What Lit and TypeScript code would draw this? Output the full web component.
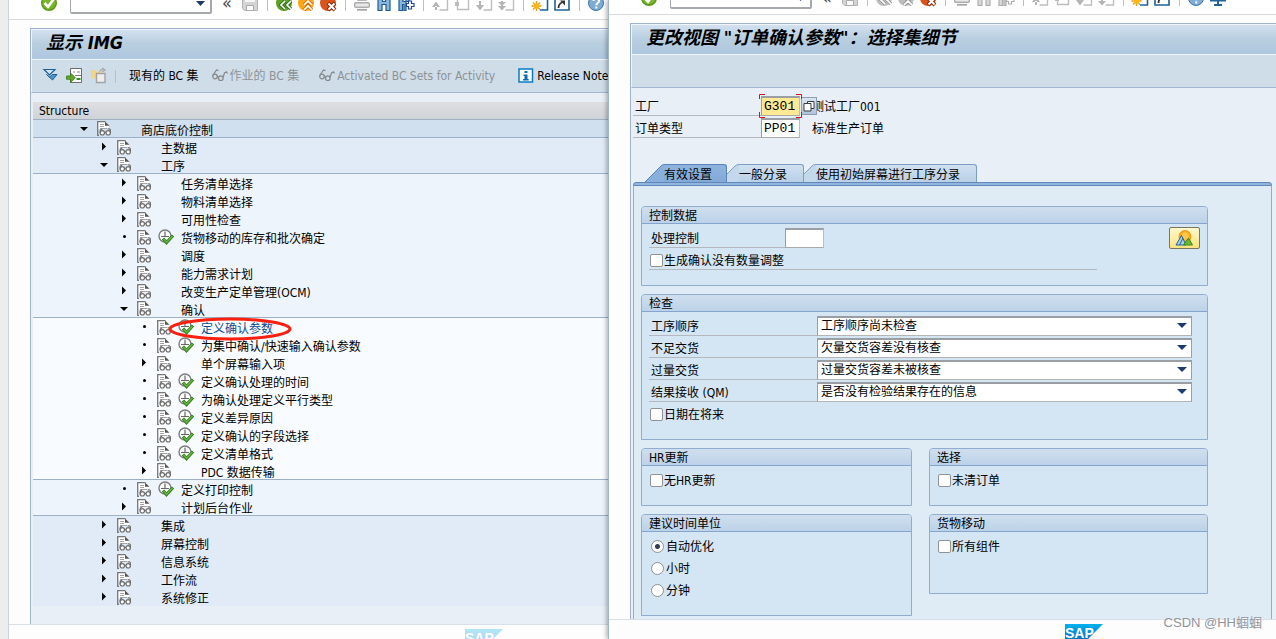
import { LitElement, html, css, svg, nothing, TemplateResult } from "lit";
import { customElement, property } from "lit/decorators.js";
import { classMap } from "lit/directives/class-map.js";

type Glyph = TemplateResult<2>;

const page = (accent: string) => svg`<path d="M4.5 1.5h11v13.5h-8" fill="#fff" stroke=${accent} stroke-width="1.4"/>`;

const glyphs: Record<string, (on: boolean) => Glyph> = {
  ok: () => svg`<circle cx="8" cy="8" r="8" fill="#5e9a1c"/><circle cx="8" cy="7.5" r="6.6" fill="#7ab52a"/><path d="M3.5 8l3.5 3.8 6-8" fill="none" stroke="#fff" stroke-width="2.6"/>`,
  save: () => svg`<path d="M.5.5h15v15h-13l-2-2z" fill="#d4d4d4" stroke="#b4b4b4"/><path d="M3 1h10v6H3z" fill="#f6f6f6"/><path d="M4.5 10.5h7v5h-7z" fill="#fafafa" stroke="#aaa"/>`,
  back: (on) => svg`<circle cx="8" cy="8" r="8" fill=${on ? "#5da023" : "#bdbdbd"}/><path d="M9 6l-4 4 4 4M15 6l-4 4 4 4" fill="none" stroke=${on ? "#2f6e12" : "#9a9a9a"} stroke-width="3.4"/><path d="M9 6l-4 4 4 4M15 6l-4 4 4 4" fill="none" stroke="#fff" stroke-width="1.7"/>`,
  exit: (on) => svg`<circle cx="8" cy="8" r="8" fill=${on ? "#f9a814" : "#bdbdbd"}/><path d="M6 10l4-4 4 4M6 15l4-4 4 4" fill="none" stroke=${on ? "#d9700a" : "#9a9a9a"} stroke-width="3.4"/><path d="M6 10l4-4 4 4M6 15l4-4 4 4" fill="none" stroke="#fff" stroke-width="1.7"/>`,
  cancel: () => svg`<circle cx="8" cy="8" r="8" fill="#d9541a"/><path d="M8 8l7 7M15 8l-7 7" stroke="#8e2a08" stroke-width="4"/><path d="M8.500 8.500l6 6M14.500 8.500l-6 6" stroke="#fff" stroke-width="2"/>`,
  print: () => svg`<path d="M3.500.5h9v5h-9z" fill="#f4f4f4" stroke="#b6b6b6"/><rect x=".7" y="7.700" width="14.600" height="4.600" rx="1" fill="#e8e8e8" stroke="#adadad" stroke-width="1.400"/><path d="M3 14.800h10" stroke="#a6a6a6" stroke-width="1.800"/>`,
  find: (on) => svg`<path d="M2 15.500v-12h4.500v3h3v-3H14v12h-4v-6H6v6z" fill=${on ? "#8bb6dc" : "#dadada"} stroke=${on ? "#1d5c96" : "#adadad"} stroke-width="1.200"/>`,
  findnext: (on) => svg`<path d="M1 15.500v-12h4v3h3v-3h3v3H8v9H6v-6H4.500v6z" fill=${on ? "#8bb6dc" : "#dadada"} stroke=${on ? "#1d5c96" : "#adadad"} stroke-width="1.200"/><path d="M10.500 6h3v2.500H16v3h-2.500V14h-3v-2.500H8.500v-3h2z" fill="#fff" stroke=${on ? "#24469a" : "#adadad"} stroke-width="1.200"/>`,
  first: () => svg`${page("#bdbdbd")}<path d="M0 12h8L4 6.500zM3 11h2v4H3z" fill="#b4b4b4"/>`,
  prev: () => svg`<path d="M3.500 1.500h11v13h-11z" fill="#fff" stroke="#bdbdbd" stroke-width="1.400"/><path d="M1 7h4v4H1z" fill="#bdbdbd"/>`,
  next: () => svg`${page("#bdbdbd")}<path d="M0 10h8l-4 5.500zM3 6h2v5H3z" fill="#b4b4b4"/>`,
  last: () => svg`${page("#bdbdbd")}<path d="M0 11h8l-4 4.500zM3 6h2v5H3zM0 7h8l-4 4z" fill="#b4b4b4"/>`,
  session: () => svg`<path d="M1.500 5V1h14v14H8" fill="#fff" stroke="#1f6398" stroke-width="1.600"/><path d="M4.500 6v10M-.5 11h10M1 7.500l7 7M8 7.500l-7 7" stroke="#ee9b12" stroke-width="1.300"/><circle cx="4.500" cy="11" r="2.800" fill="#ffb61c"/>`,
  shortcut: () => svg`<path d="M1 1h14v14H1z" fill="#fff" stroke="#1f6398" stroke-width="1.600"/><path d="M4.500 13c0-3 1-4.500 3.500-5.500" fill="none" stroke="#333" stroke-width="1.800"/><path d="M6 5.500h5v5z" fill="#333"/>`,
  help: () => svg`<circle cx="8" cy="8" r="7.500" fill="#7fabd3" stroke="#3c76ae"/><path d="M5.500 6c0-3 5.500-3 5.500 0 0 2-2.700 2-2.700 4.200M8.300 11.500v2" fill="none" stroke="#fff" stroke-width="2"/>`,
  monitor: () => svg`<path d="M.7 1.700h14.600v9H.7z" fill="#8bc0e6" stroke="#1f6398" stroke-width="1.400"/><path d="M8 11v3M4 15h8" stroke="#1f6398" stroke-width="2"/>`,
};

const collapseAll = svg`<path d="M1 1.500h11L6.500 7z" fill="#cfe3f3" stroke="#1e5f94" stroke-width="1.200"/><path d="M3.500 6.500l3 2.500 3-2.500H14L9.500 12z" fill="#4e94c8" stroke="#1e5f94"/>`;
const subnodes = svg`<path d="M3.500 .5h11v14h-11z" fill="#fff" stroke="#6d6d6d"/><path d="M6 4h2M10 4h3" stroke="#8a8a8a"/><path d="M8 7.500h6" stroke="#7d7d7d"/><path d="M9.500 11h4" stroke="#3a8a24" stroke-width="2"/><path d="M-.5 8h4V5L8.500 9.700 3.500 14.500v-3.200h-4z" fill="#62a52a" stroke="#3a7a16" stroke-width=".8"/>`;
const copyNode = svg`<path d="M0 2h4l1 1.500h5V10.500H0z" fill="#f2d48c"/><path d="M8.500 3.500a4 3 0 0 1 4-2M11 0l3 2-3 2" fill="none" stroke="#a7a7a7" stroke-width="1.200"/><path d="M5.500 5.500h8.500v9H5.500z" fill="#eee" stroke="#a3a3a3" stroke-width="1.400"/>`;
const glasses = (tone: string) => svg`<g fill="none" stroke=${tone} stroke-width="1.200"><circle cx="3" cy="8.500" r="2.300"/><circle cx="8.800" cy="10.200" r="2.300"/><path d="M.8 7.500L4.500 2l2 .6M5 8l1.600 1.200M11 9.500l1.500-4.500 2-1.200 1 1.700"/></g>`;
const docIcon = svg`<path d="M1 14.500V.7h7.500L12 4.500V8H1z" fill="#fff"/><path d="M2 14.300H.7V.7h7.800" fill="none" stroke="#777" stroke-width="1.300"/><path d="M8 .5v4.200h4.500z" fill="#555"/><path d="M3 3.500h4M3 5.500h4M3 7.500h7" stroke="#a4a4a4"/><g fill="#fff" stroke="#6e6e6e" stroke-width="1.200"><circle cx="5.300" cy="11.800" r="2.200"/><circle cx="11.200" cy="11.800" r="2.200"/><path d="M3.100 11.500c0-2.500.5-3.500 2.200-3.500M7.500 11.500h1.500M13.400 12V9.700c0-1.500-1-2.200-2.800-1.800" fill="none"/></g>`;
const runIcon = svg`<circle cx="7" cy="7" r="6" fill="#fff" stroke="#7d7d7d" stroke-width="1.400"/><path d="M7 2.500v5h4M3 7.500h4" fill="none" stroke="#666" stroke-width="1.200"/><path d="M5 9.500l3.500 4L15 6.500" fill="none" stroke="#2f7a1c" stroke-width="3.200"/><path d="M5.500 10l3 3.300L14.500 7" fill="none" stroke="#66b53c" stroke-width="1.600"/>`;
const picture = svg`<circle cx="9" cy="6.500" r="6" fill="#f9ae1c" stroke="#e08a10" stroke-width=".8"/><circle cx="9" cy="6" r="3.500" fill="#fdc84a"/><path d="M0 15L5.500 5.500 10 15z" fill="#a8d0ea" stroke="#20629a"/><path d="M3.500 15L7 8" stroke="#20629a"/><path d="M7.500 15L12.500 8l4 7z" fill="#6fb52c" stroke="#3c8a1e"/>`;

const icon = (body: unknown, w = 16, h = 16) =>
  html`<svg class="ic" width=${w} height=${h} viewBox="0 0 ${w} ${h}" aria-hidden="true">${body}</svg>`;

const fonts = css`
  *, *::before, *::after { box-sizing: border-box; }
  button, input, select {
    margin: 0; padding: 0; border: 0; background: none; color: inherit;
    font: inherit; border-radius: 0; appearance: none; outline: 0;
  }
  .ic { display: block; flex: none; overflow: visible; }
`;

@customElement("sap-toolbar")
class SapToolbar extends LitElement {
  @property() mode = "display";

  static styles = [fonts, css`
    :host { display: block; background: #fff; border-bottom: 1px solid #d8dade; }
    .bar { display: flex; align-items: flex-end; gap: 6px; height: 19px; padding: 0 0 8px 32px; }
    :host([mode="change"]) .bar { height: 14px; }
    button { flex: none; display: block; }
    .cmd { display: grid; flex: none; width: 142px; margin: 0 4px -3px 7px; }
    .cmd > * { grid-area: 1 / 1; }
    .cmd input { width: 100%; height: 22px; border: 1px solid #a5a9ad; border-width: 1px 2px 2px 1px; background: #fff; border-radius: 2px; }
    .cmd svg { justify-self: end; align-self: end; margin: 0 7px 7px 0; }
    .fold { width: 10px; margin-right: 4px; font-size: 18px; line-height: 17px; color: #4c4c4c; font-family: "DejaVu Sans Condensed", sans-serif; }
    .sep { flex: none; width: 1px; height: 16px; margin: 0 2px 0 3px; background: #a9c2dd; }
  `];

  render() {
    const on = this.mode === "display";
    const b = (name: string, label: string, live = on) =>
      html`<button type="button" aria-label=${label}>${icon(glyphs[name](live))}</button>`;
    const sep = html`<span class="sep"></span>`;
    return html`<div class="bar">
      ${b("ok", "Enter")}
      <div class="cmd">
        <input aria-label="Command" />
        <svg width="9" height="6" viewBox="0 0 9 6"><path d="M0 0h9L4.500 5z" fill="#1f3a73" /></svg>
      </div>
      <button class="fold" type="button">«</button>
      ${b("save", "Save")} ${sep}
      ${b("back", "Back")} ${b("exit", "Exit")} ${b("cancel", "Cancel", true)} ${sep}
      ${b("print", "Print")} ${b("find", "Find")} ${b("findnext", "Find next")} ${sep}
      ${b("first", "First page")} ${b("prev", "Previous page")} ${b("next", "Next page")} ${b("last", "Last page")} ${sep}
      ${b("session", "New session")} ${b("shortcut", "Shortcut")} ${sep}
      ${b("help", "Help")} ${b("monitor", "Layout")}
    </div>`;
  }
}

interface Node { level: number; kind: "open" | "closed" | "leaf"; text: string; run?: boolean; line?: boolean; marked?: boolean; }

const nodes: Node[] = [
  { level: 0, kind: "open", text: "商店底价控制", line: true },
  { level: 1, kind: "closed", text: "主数据" },
  { level: 1, kind: "open", text: "工序", line: true },
  { level: 2, kind: "closed", text: "任务清单选择" },
  { level: 2, kind: "closed", text: "物料清单选择" },
  { level: 2, kind: "closed", text: "可用性检查" },
  { level: 2, kind: "leaf", text: "货物移动的库存和批次确定", run: true },
  { level: 2, kind: "closed", text: "调度" },
  { level: 2, kind: "closed", text: "能力需求计划" },
  { level: 2, kind: "closed", text: "改变生产定单管理(OCM)" },
  { level: 2, kind: "open", text: "确认", line: true },
  { level: 3, kind: "leaf", text: "定义确认参数", run: true, marked: true },
  { level: 3, kind: "leaf", text: "为集中确认/快速输入确认参数", run: true },
  { level: 3, kind: "closed", text: "单个屏幕输入项" },
  { level: 3, kind: "leaf", text: "定义确认处理的时间", run: true },
  { level: 3, kind: "leaf", text: "为确认处理定义平行类型", run: true },
  { level: 3, kind: "leaf", text: "定义差异原因", run: true },
  { level: 3, kind: "leaf", text: "定义确认的字段选择", run: true },
  { level: 3, kind: "leaf", text: "定义清单格式", run: true },
  { level: 3, kind: "closed", text: "PDC 数据传输", line: true },
  { level: 2, kind: "leaf", text: "定义打印控制", run: true },
  { level: 2, kind: "closed", text: "计划后台作业", line: true },
  { level: 1, kind: "closed", text: "集成" },
  { level: 1, kind: "closed", text: "屏幕控制" },
  { level: 1, kind: "closed", text: "信息系统" },
  { level: 1, kind: "closed", text: "工作流" },
  { level: 1, kind: "closed", text: "系统修正" },
];

@customElement("img-tree")
class ImgTree extends LitElement {
  static styles = [fonts, css`
    :host { display: block; }
    .head {
      height: 18px; padding-left: 6px; line-height: 18px;
      background: linear-gradient(#dedfe0, #cfd4d8); border-bottom: 1px solid #a0b0c0;
    }
    ul { list-style: none; margin: 0; padding: 0; }
    li { position: relative; display: flex; align-items: center; height: 18px; white-space: nowrap; }
    .l0 { background: #d1e0ef; padding-left: 44px; }
    .l1 { background: #e1ebf7; padding-left: 64px; }
    .l2 { background: #edf4fc; padding-left: 84px; }
    .l3 { background: #f8fbff; padding-left: 104px; }
    .line { border-bottom: 1px solid #9cb1c8; }
    .toggle { width: 14px; height: 16px; margin-right: 6px; }
    .doc { height: 15px; margin-right: 7px; }
    .run { width: 16px; height: 16px; margin-right: 7px; }
    .text { height: 18px; padding-top: 2px; line-height: 18px; }
    .marked .text { color: #0f4c91; text-decoration: none; }
    .ring { position: absolute; left: 135px; top: -1px; z-index: 1; pointer-events: none; }
  `];

  render() {
    const marks = {
      open: svg`<path d="M3 5h8L7 9z"/>`,
      closed: svg`<path d="M5 2.500l4 4-4 4z"/>`,
      leaf: svg`<circle cx="7.500" cy="6.500" r="1.500"/>`,
    };
    return html`<div class="head">Structure</div>
      <ul>
        ${nodes.map((n) => html`<li class=${classMap({ [`l${n.level}`]: true, line: !!n.line, marked: !!n.marked })}>
          <button class="toggle" type="button" aria-label="展开">${icon(marks[n.kind], 14, 14)}</button>
          <span class="doc">${icon(docIcon, 14, 15)}</span>
          <span class="run">${n.run ? icon(runIcon) : nothing}</span>
          ${n.marked
            ? html`<a class="text" href="#">${n.text}</a>
                <svg class="ring" width="124" height="24" viewBox="0 0 124 24"><ellipse cx="62" cy="12" rx="60" ry="10" fill="none" stroke="#f9200f" stroke-width="3" /></svg>`
            : html`<span class="text">${n.text}</span>`}
        </li>`)}
      </ul>`;
  }
}

@customElement("app-root")
class AppRoot extends LitElement {
  static styles = [fonts, css`
    :host {
      position: relative; display: grid; grid-template-columns: 9px 599fr 668fr;
      height: 100vh; overflow: hidden; color: #000;
      font: 12px/18px "DejaVu Sans Condensed", "Noto Sans CJK SC", sans-serif;
    }
    .edge { background: #ededed; border-right: 1px solid #c9d3de; }
    .window { display: flex; flex-direction: column; min-width: 0; overflow: hidden; background: #fdfdfe; }
    .front { z-index: 1; overflow: visible; border-left: 1px solid #a3b3c8; box-shadow: -2px 0 4px #0004; }
    sap-toolbar { overflow: hidden; }
    .screen {
      display: flex; flex-direction: column; flex: 1; min-height: 0; margin: 8px 0 0 21px;
      border: solid #9fb1cb; border-width: 1px 0 0 1px; background: #e8eff7;
    }
    h1 {
      margin: 0; height: 31px; padding: 0 0 4px 14px; border: solid #eef4fa; border-width: 1px 0 1px 1px;
      background: linear-gradient(#d3e1f0, #b9cfe0 45%, #aec6df); white-space: nowrap;
      font: italic bold 18px/25px "DejaVu Sans Condensed", "Noto Sans CJK SC", sans-serif;
    }
    .actions {
      display: flex; align-items: center; height: 33px; padding-left: 11px; white-space: nowrap;
      background: #cfdde8; border-bottom: 1px solid #a3b6cf; border-left: 1px solid #eef4fa;
    }
    .actions button { display: flex; align-items: center; flex: none; }
    .tool { margin-right: 8px; }
    .split { flex: none; width: 1px; height: 13px; margin: 0 13px 0 0; background: #a9c2dd; }
    .cmd { margin-right: 13px; }
    .off { color: #8d9296; margin-right: 20px; gap: 2px; }
    .off + .off { margin-right: 23px; }
    .info { gap: 3px; }
    .foot { display: flex; flex: none; justify-content: flex-end; height: 15px; padding: 4px 105px 0 0; border-top: 1px solid #d9dfe8; overflow: hidden; }
    .front .foot { height: 20px; padding-right: 173px; }
    .faded { opacity: .3; }
    img-tree { margin: 9px 0 0 2px; }

    .keys { padding: 6px 0 26px 2px; }
    .row { position: relative; display: flex; height: 22px; align-items: flex-end; white-space: nowrap; }
    .caption { width: 128px; height: 18px; line-height: 19px; padding-left: 2px; border-bottom: 1px solid #b5b8bc; }
    .field { width: 39px; height: 20px; border: solid #9b9fa4; border-width: 2px 1px 1px 1px; border-right-color: #bbb; border-bottom-color: #aaa; background: #fff; }
    .key { padding-left: 2px; font-family: "Liberation Mono", monospace; font-size: 13px; }
    .active { background: #ffe995; }
    .desc { padding-left: 12px; height: 18px; line-height: 19px; }
    .corners { position: absolute; left: 126px; top: 0; z-index: 1; pointer-events: none; }
    .f4 { position: absolute; left: 168px; top: 3px; width: 16px; height: 18px; padding: 2px 1px; border: 1px solid #8f9db2; background: linear-gradient(#dbe6f3, #aec3de); }

    .tabs { display: flex; height: 18px; padding-left: 14px; }
    .tab { display: flex; height: 18px; white-space: nowrap; }
    .tab span { height: 18px; line-height: 20px; padding-right: 16px; border: solid #7e9fc4; border-width: 1px 1px 0 0; border-radius: 0 3px 0 0; background: linear-gradient(#d0e0f0, #b9d0e7); }
    .tab.sel span { padding-right: 14px; border-color: #5a84b8; background: linear-gradient(#8fb3de, #82a9d8); }
    .sheet {
      flex: 1; margin: 0 4px 0 2px; padding: 20px 63px 0 7px; background: #dfebf5;
      border: solid #8fadd0; border-width: 0 1px; position: relative;
      display: flex; flex-direction: column; gap: 8px;
    }
    .rule { height: 4px; margin: 0 4px 0 2px; border: 1px solid #5f89ba; border-radius: 3px 3px 0 0; background: #93b4de; }
    .cols { display: grid; grid-template-columns: 271fr 279fr; gap: 8px 17px; align-items: start; }
    fieldset { margin: 0; min-width: 0; padding: 0; border: 1px solid #90add0; border-radius: 4px 4px 0 0; background: #d4e5f4; }
    h2 {
      margin: 0; height: 17px; padding-left: 7px; font: inherit; line-height: 18px; border-radius: 3px 3px 0 0;
      background: linear-gradient(#d0dfef, #bcd2e8); border-bottom: 1px solid #85a5cc;
    }
    .body { padding: 2px 0 15px 7px; }
    .proc .caption { width: 136px; }
    .checks .caption { width: 168px; }
    .art { position: absolute; right: 7px; top: 1px; width: 31px; height: 22px; padding: 2px 6px; border: 1px solid #7a7560; border-radius: 2px; background: linear-gradient(#fff8cc, #fde37c); }
    .pick { flex: 1; display: grid; height: 20px; margin-right: 15px; }
    .pick > * { grid-area: 1 / 1; }
    .pick select { width: 100%; height: 20px; padding-left: 3px; border: solid #9b9fa4; border-width: 2px 1px 1px 1px; border-bottom-color: #b5b5b5; background: #fff; line-height: 17px; }
    .pick svg { justify-self: end; align-self: center; margin-right: 5px; pointer-events: none; }
    .opt { display: flex; align-items: center; gap: 1px; height: 19px; padding-left: 1px; line-height: 17px; }
    .opt span { padding-top: 2px; }
    .opt input { flex: none; width: 13px; height: 13px; border: 1px solid #8f9296; border-radius: 2px; background: #fff; }
    .opt input[type="radio"] { border-radius: 50%; margin: 0 1px; }
    .opt input[type="radio"]:checked { background: radial-gradient(circle at center, #333a55 2px, #fff 3px); }
    .under { flex: 1; margin-right: 110px; border-bottom: 1px solid #b5b8bc; }
    .mark { position: absolute; right: 14px; bottom: 7px; z-index: 2; color: #8e959c; font: 13px/18px "Liberation Sans", "Noto Sans CJK SC", sans-serif; text-shadow: 1px 1px 0 #fff; }
  `];

  logo(id: string, cls = "") {
    return html`<svg class="ic ${cls}" width="38" height="19" viewBox="0 0 38 19" role="img" aria-label="SAP">
      <defs><linearGradient id=${id} x2="0" y2="1"><stop stop-color="#00b2ee" /><stop offset="1" stop-color="#0f62b8" /></linearGradient></defs>
      <path d="M0 0h38L19 19H0z" fill="url(#${id})" />
      <text x="0" y="14" font-family="Liberation Sans, sans-serif" font-weight="bold" font-size="14" fill="#fff">SAP</text>
    </svg>`;
  }

  pick(id: string, label: string, value: string) {
    return html`<div class="row">
      <label class="caption" for=${id}>${label}</label>
      <div class="pick">
        <select id=${id}><option>${value}</option></select>
        <svg width="10" height="6" viewBox="0 0 10 6"><path d="M0 0h10L5 5z" fill="#1f3a73" /></svg>
      </div>
    </div>`;
  }

  check(text: string, cls = "") {
    return html`<div class="row"><label class="opt ${cls}"><input type="checkbox" /><span>${text}</span></label></div>`;
  }

  radio(text: string, checked = false) {
    return html`<div class="row"><label class="opt"><input type="radio" name="unit" ?checked=${checked} /><span>${text}</span></label></div>`;
  }

  tab(text: string, selected = false) {
    const slope = selected
      ? html`<svg class="ic" width="19" height="18" viewBox="0 0 19 18"><path d="M0 18L16 2Q17.500.5 19 .5V18z" fill="#8aafdb" /><path d="M0 18L16 2Q17.500.5 19 .5" fill="none" stroke="#5a84b8" /></svg>`
      : html`<svg class="ic" width="12" height="18" viewBox="0 0 12 18"><path d="M0 10L8 2Q9.500.5 12 .5V18H0z" fill="#c4d8eb" /><path d="M0 10L8 2Q9.500.5 12 .5" fill="none" stroke="#7e9fc4" /></svg>`;
    return html`<button type="button" role="tab" aria-selected=${selected} class=${classMap({ tab: true, sel: selected })}>${slope}<span>${text}</span></button>`;
  }

  render() {
    return html`
      <div class="edge"></div>
      <section class="window">
        <sap-toolbar mode="display"></sap-toolbar>
        <div class="screen">
          <h1>显示 IMG</h1>
          <div class="actions">
            <button class="tool" type="button" aria-label="全部折叠">${icon(collapseAll)}</button>
            <button class="tool" type="button" aria-label="子节点">${icon(subnodes)}</button>
            <button class="tool" type="button" aria-label="复制">${icon(copyNode)}</button>
            <span class="split"></span>
            <button class="cmd" type="button">现有的 BC 集</button>
            <button class="off" type="button">${icon(glasses("#85898c"))}作业的 BC 集</button>
            <button class="off" type="button">${icon(glasses("#85898c"))}Activated BC Sets for Activity</button>
            <button class="info" type="button">${icon(svg`<path d="M1 1h13.500v13H1z" fill="#fff" stroke="#0a7cc4" stroke-width="1.500"/><path d="M6.500 3h3v2h-3zM5.500 6.500h4V11h1.200v1.500H5V11h1.500V8h-1z" fill="#0a6cb4"/>`)}Release Note</button>
          </div>
          <img-tree></img-tree>
        </div>
        <div class="foot">${this.logo("ga", "faded")}</div>
      </section>

      <section class="window front">
        <sap-toolbar mode="change"></sap-toolbar>
        <div class="screen">
          <h1>更改视图 "订单确认参数"：选择集细节</h1>
          <div class="actions"></div>
          <div class="keys">
            <div class="row">
              <label class="caption" for="plant">工厂</label>
              <input class="field key active" id="plant" value="G301" />
              <span class="desc">测试工厂001</span>
              <svg class="corners" width="43" height="24" viewBox="0 0 43 24"><path d="M.5 5V.5H6M37 .5h5.500V5M42.500 18v5.500H37M6 23.500H.5V18" fill="none" stroke="#d8121a" /></svg>
              <button class="f4" type="button" aria-label="搜索帮助"><svg class="ic" width="12" height="12" viewBox="0 0 12 12"><path d="M4.500 1.500h6.500v7h-6.500z" fill="#fff" stroke="#3c3c3c" /><path d="M1 3.500h7v7.500H1z" fill="#fff" stroke="#3c3c3c" /></svg></button>
            </div>
            <div class="row">
              <label class="caption" for="type">订单类型</label>
              <input class="field key" id="type" value="PP01" />
              <span class="desc">标准生产订单</span>
            </div>
          </div>
          <div class="tabs" role="tablist">
            ${this.tab("有效设置", true)} ${this.tab("一般分录")} ${this.tab("使用初始屏幕进行工序分录")}
          </div>
          <div class="rule"></div>
          <div class="sheet">
            <fieldset class="proc" aria-label="控制数据">
              <h2>控制数据</h2>
              <div class="body">
                <div class="row">
                  <label class="caption" for="ctl">处理控制</label><input class="field" id="ctl" />
                  <button class="art" type="button" aria-label="图片">${icon(picture)}</button>
                </div>
                ${this.check("生成确认没有数量调整", "under")}
              </div>
            </fieldset>
            <fieldset class="checks" aria-label="检查">
              <h2>检查</h2>
              <div class="body">
                ${this.pick("seq", "工序顺序", "工序顺序尚未检查")}
                ${this.pick("under", "不足交货", "欠量交货容差没有核查")}
                ${this.pick("over", "过量交货", "过量交货容差未被核查")}
                ${this.pick("qm", "结果接收 (QM)", "是否没有检验结果存在的信息")}
                ${this.check("日期在将来")}
              </div>
            </fieldset>
            <div class="cols">
              <fieldset aria-label="HR更新"><h2>HR更新</h2><div class="body">${this.check("无HR更新")}</div></fieldset>
              <fieldset aria-label="选择"><h2>选择</h2><div class="body">${this.check("未清订单")}</div></fieldset>
              <fieldset aria-label="建议时间单位"><h2>建议时间单位</h2>
                <div class="body">${this.radio("自动优化", true)} ${this.radio("小时")} ${this.radio("分钟")}</div>
              </fieldset>
              <fieldset aria-label="货物移动"><h2>货物移动</h2>
                <div class="body">${this.check("所有组件")}<div class="row"></div></div>
              </fieldset>
            </div>
          </div>
        </div>
        <div class="foot">${this.logo("gb")}</div>
      </section>
      <div class="mark">CSDN @HH蝈蝈</div>
    `;
  }
}
